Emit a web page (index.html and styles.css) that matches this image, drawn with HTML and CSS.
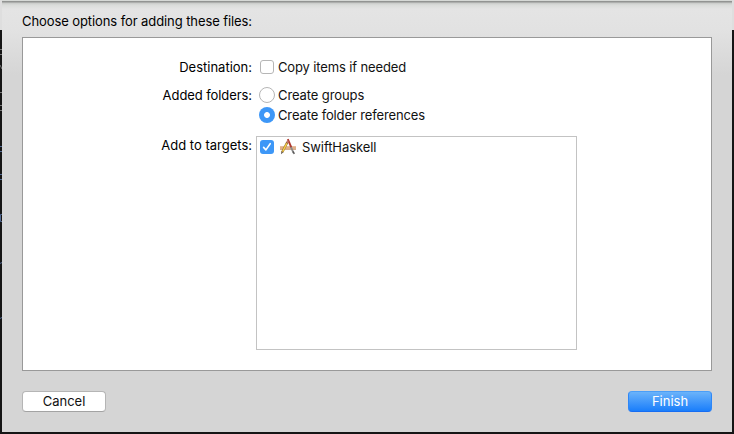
FILE: index.html
```
<!DOCTYPE html>
<html lang="en">
<head>
<meta charset="utf-8">
<title>Add Files</title>
<link rel="stylesheet" href="styles.css">
</head>
<body>
<svg class="backdrop" width="734" height="434" aria-hidden="true">
  <path d="M0 49.5h2M0 54.5h2M0 92.5h2M0 105.5h2M0 110.5h2" stroke="#777"/>
  <path d="M0 65l2 4" stroke="#777"/>
  <path d="M0 146.5h2M0 151.5h2M0 174.5h2M0 179.5h2M2 214.5H.5v7H2M0 263.5l2-1M0 318.5l2-1" fill="none" stroke="#536a94"/>
</svg>
<main class="sheet">
  <h1 class="title">Choose options for adding these files:</h1>
  <section class="panel">
    <div class="row destination">
      <span class="label">Destination:</span>
      <span class="option"><i class="check"></i><span class="copy">Copy items if needed</span></span>
    </div>
    <div class="row folders">
      <span class="label added">Added folders:</span>
      <div>
        <div class="option"><i class="radio"></i><span class="groups">Create groups</span></div>
        <div class="option"><i class="radio selected"></i><span class="references">Create folder references</span></div>
      </div>
    </div>
    <div class="row targets">
      <span class="label">Add to targets:</span>
      <div class="list">
        <div class="target">
          <svg class="checked" width="14" height="14" viewBox="0 0 14 14"><rect width="14" height="14" rx="3" fill="#3d97f7"/><path d="M3.6 7.4l2.3 2.5 4.3-6.2" fill="none" stroke="#fff" stroke-width="1.6" stroke-linecap="round" stroke-linejoin="round"/></svg>
          <svg class="app" width="18" height="18" viewBox="0 0 18 18">
            <path d="M1 8.2h16v3.3H1z" fill="#e0b08a"/><path d="M1 11.5h16" stroke="#c99a74" stroke-width=".7"/>
            <path d="M11.5 8l3 7" stroke="#888" stroke-width="1.9"/><path d="M8.8 1.2l3.4 8" stroke="#b03a30" stroke-width="1.9"/><path d="M14.2 13.5l1 2.5" stroke="#555" stroke-width="1.4"/>
            <path d="M8.3 4.2L3.2 14.2" stroke="#87602a" stroke-width="2.3"/><path d="M7.8 5.3L3.6 13.7" stroke="#f5d04a" stroke-width="1.5"/><path d="M9 2.6L8 4.6" stroke="#c0786b" stroke-width="2"/><path d="M2.4 13.6l1.7.9-2.1 1.8z" fill="#5c5147"/>
          </svg>
          <span class="name">SwiftHaskell</span>
        </div>
      </div>
    </div>
  </section>
  <footer class="actions"><button class="cancel"><span>Cancel</span></button><button class="finish"><span>Finish</span></button></footer>
</main>
</body>
</html>
```
FILE: styles.css
```
* { box-sizing: border-box; }
body {
  margin: 0;
  width: 734px;
  height: 434px;
  padding: 0 2px 2px;
  overflow: hidden;
  background: linear-gradient(#dedede 30px, #151515 30px);
  font: 13px/20px Inter, "Liberation Sans", sans-serif;
  color: #111;
}
.backdrop { position: absolute; left: 0; top: 0; }
.sheet {
  position: relative;
  height: 432px;
  padding: 11px 20px 0;
  background: linear-gradient(#d6d9d6 0 1px, #929492 1px 2px, #c8cac8 3px, #dadcda 5px, #e4e4e4 9px, #e2e2e2 30px, #d5d5d5 75px);
}
.title { margin: 0; height: 26px; font: inherit; letter-spacing: -.09px; color: #000; white-space: nowrap; }
.panel { height: 334px; padding-top: 19px; border: 1px solid #999; background: #fff; }
.row { display: grid; grid-template-columns: 229px 321px; column-gap: 4px; }
.label { text-align: right; white-space: nowrap; color: #000; }
.added { letter-spacing: -.08px; }
.copy, .references { letter-spacing: -.13px; }
.groups { letter-spacing: -.1px; }
.name { letter-spacing: -.08px; }
.destination { height: 28px; }
.folders { height: 50px; }
.option { display: flex; align-items: center; height: 20px; padding-left: 4px; white-space: nowrap; }
.check { width: 14px; height: 14px; margin: 0 4px 0 0; border: 1px solid #b6b6b6; border-radius: 3px; }
.radio { width: 16px; height: 16px; margin: 0 3px 0 -1px; border: 1px solid #b6b6b6; border-radius: 50%; }
.selected { border: 0; background: radial-gradient(circle, #fff 2.5px, #3d97f7 3.3px); }
.list { height: 214px; margin-top: 1px; border: 1px solid #c3c3c3; }
.target { display: flex; align-items: center; height: 20px; padding-left: 3px; }
.app { margin: 0 5px 0 5px; }
.actions { display: flex; justify-content: space-between; padding-top: 20px; }
.actions button { width: 84px; height: 21px; padding: 0 0 1px; border: 1px solid #b5b5b5; border-bottom-color: #a3a3a3; border-radius: 4px; background: #fff; font: inherit; line-height: 18px; color: #111; }
.actions .finish { border-color: #4a9ef8 #2d86f7 #176df2; background: linear-gradient(#6bb3fa, #1a7efb); color: #fff; }
```
